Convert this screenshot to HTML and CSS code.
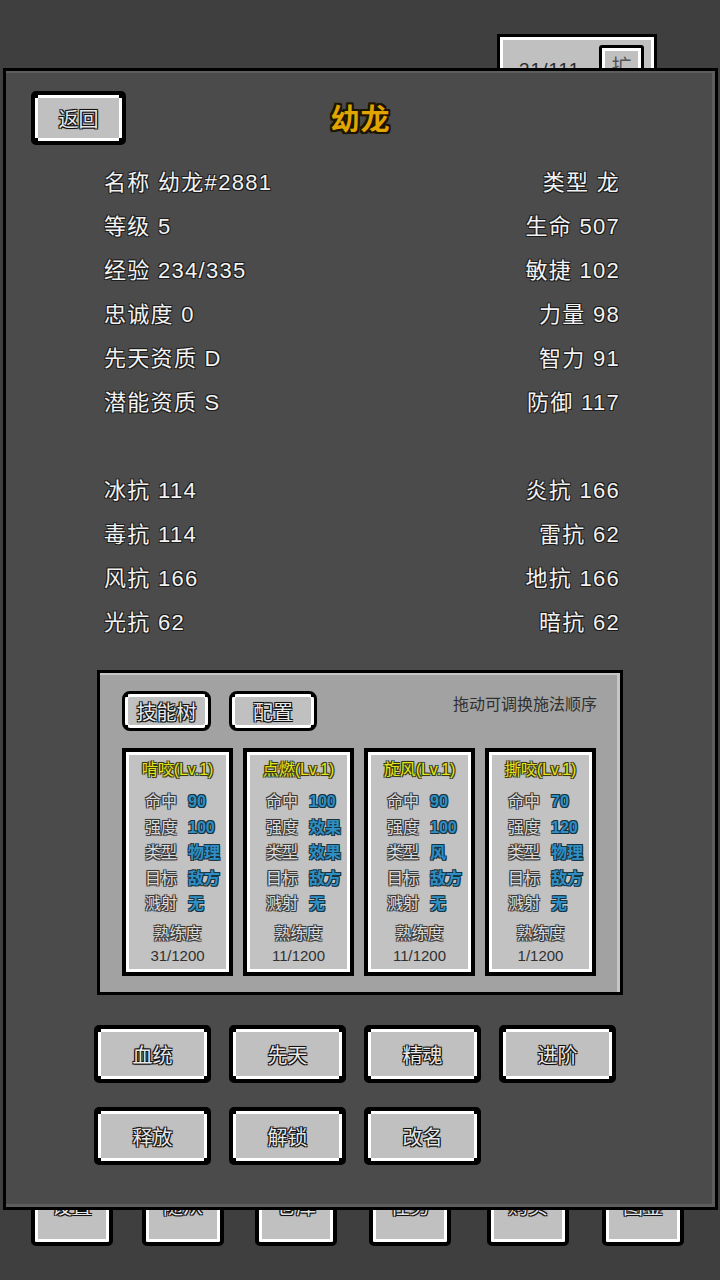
FILE: index.html
```html
<!DOCTYPE html>
<html lang="zh">
<head>
<meta charset="utf-8">
<link rel="stylesheet" href="styles.css">
</head>
<body>
<div class="screen">
  <div class="toptab">
    <span class="toptab-count">31/111</span>
    <span class="toptab-btn">扩</span>
  </div>

  <div class="bottomtabs">
    <div class="btab"><span class="ol">设置</span></div>
    <div class="btab"><span class="ol">随从</span></div>
    <div class="btab"><span class="ol">仓库</span></div>
    <div class="btab"><span class="ol">任务</span></div>
    <div class="btab"><span class="ol">购买</span></div>
    <div class="btab"><span class="ol">图鉴</span></div>
  </div>

  <div class="panel">
    <div class="header">
      <div class="pbtn back"><span class="ol">返回</span></div>
      <div class="title">幼龙</div>
      <div></div>
    </div>

    <div class="stats">
      <div>名称 幼龙#2881</div><div class="r">类型 龙</div>
      <div>等级 5</div><div class="r">生命 507</div>
      <div>经验 234/335</div><div class="r">敏捷 102</div>
      <div>忠诚度 0</div><div class="r">力量 98</div>
      <div>先天资质 D</div><div class="r">智力 91</div>
      <div>潜能资质 S</div><div class="r">防御 117</div>
      <div class="blank"></div><div class="blank"></div>
      <div>冰抗 114</div><div class="r">炎抗 166</div>
      <div>毒抗 114</div><div class="r">雷抗 62</div>
      <div>风抗 166</div><div class="r">地抗 166</div>
      <div>光抗 62</div><div class="r">暗抗 62</div>
    </div>

    <div class="skills">
      <div class="skills-head">
        <div class="pbtn small sb1"><span class="ol">技能树</span></div>
        <div class="pbtn small sb2"><span class="ol">配置</span></div>
        <div class="hint">拖动可调换施法顺序</div>
      </div>
      <div class="cards">
        <div class="card">
          <div class="ctitle">啃咬(Lv.1)</div>
          <div class="crows">
            <span class="lab">命中</span><span class="val">90</span>
            <span class="lab">强度</span><span class="val">100</span>
            <span class="lab">类型</span><span class="val">物理</span>
            <span class="lab">目标</span><span class="val">敌方</span>
            <span class="lab">溅射</span><span class="val">无</span>
          </div>
          <div class="prof lab">熟练度</div>
          <div class="pnum">31/1200</div>
        </div>
        <div class="card">
          <div class="ctitle">点燃(Lv.1)</div>
          <div class="crows">
            <span class="lab">命中</span><span class="val">100</span>
            <span class="lab">强度</span><span class="val">效果</span>
            <span class="lab">类型</span><span class="val">效果</span>
            <span class="lab">目标</span><span class="val">敌方</span>
            <span class="lab">溅射</span><span class="val">无</span>
          </div>
          <div class="prof lab">熟练度</div>
          <div class="pnum">11/1200</div>
        </div>
        <div class="card">
          <div class="ctitle">旋风(Lv.1)</div>
          <div class="crows">
            <span class="lab">命中</span><span class="val">90</span>
            <span class="lab">强度</span><span class="val">100</span>
            <span class="lab">类型</span><span class="val">风</span>
            <span class="lab">目标</span><span class="val">敌方</span>
            <span class="lab">溅射</span><span class="val">无</span>
          </div>
          <div class="prof lab">熟练度</div>
          <div class="pnum">11/1200</div>
        </div>
        <div class="card">
          <div class="ctitle">撕咬(Lv.1)</div>
          <div class="crows">
            <span class="lab">命中</span><span class="val">70</span>
            <span class="lab">强度</span><span class="val">120</span>
            <span class="lab">类型</span><span class="val">物理</span>
            <span class="lab">目标</span><span class="val">敌方</span>
            <span class="lab">溅射</span><span class="val">无</span>
          </div>
          <div class="prof lab">熟练度</div>
          <div class="pnum">1/1200</div>
        </div>
      </div>
    </div>

    <div class="actions">
      <div class="pbtn act"><span class="ol">血统</span></div>
      <div class="pbtn act"><span class="ol">先天</span></div>
      <div class="pbtn act"><span class="ol">精魂</span></div>
      <div class="pbtn act"><span class="ol">进阶</span></div>
      <div class="pbtn act"><span class="ol">释放</span></div>
      <div class="pbtn act"><span class="ol">解锁</span></div>
      <div class="pbtn act"><span class="ol">改名</span></div>
    </div>
  </div>
</div>
</body>
</html>
```

FILE: styles.css
```css
* { box-sizing: border-box; }

html, body {
  margin: 0;
  padding: 0;
}

body {
  background: #3f3f3f;
  font-family: "Liberation Sans", "Noto Sans CJK SC", sans-serif;
  color: #f0f0f0;
}

.screen {
  position: relative;
  width: 720px;
  height: 1280px;
  padding-top: 68px;
  padding-left: 3px;
  overflow: hidden;
}

.ol {
  text-shadow: -1px -1px 0 #111, 1px -1px 0 #111, -1px 1px 0 #111, 1px 1px 0 #111, 0 0 2px #000;
}

/* ---------- background tabs (under the panel) ---------- */
.toptab {
  position: absolute;
  left: 497px;
  top: 34px;
  width: 160px;
  height: 60px;
  background: #c0c0c0;
  border: 3px solid #000;
  box-shadow: inset 0 0 0 3px #fff;
  display: flex;
  align-items: flex-start;
  padding: 8px 10px 0 19px;
  z-index: 0;
}

.toptab-count {
  font-size: 19px;
  line-height: 24px;
  color: #2a2a2a;
  margin-top: 13px;
  letter-spacing: 1px;
}

.toptab-btn {
  margin-left: auto;
  width: 45px;
  height: 40px;
  border: 3px solid #000;
  border-radius: 3px;
  box-shadow: inset 0 0 0 3px #fff;
  background: #c0c0c0;
  font-size: 20px;
  line-height: 30px;
  text-align: center;
  color: #555;
  padding-top: 4px;
}

.bottomtabs {
  position: absolute;
  left: 0;
  top: 1170px;
  width: 720px;
  height: 76px;
  z-index: 0;
}

.btab {
  position: absolute;
  top: 0;
  width: 82px;
  height: 76px;
  background: #c0c0c0;
  border: 4px solid #000;
  border-radius: 0 0 5px 5px;
  box-shadow: inset 0 0 0 3px #fff;
  text-align: center;
  font-size: 20px;
  line-height: 24px;
  padding-top: 21px;
  color: #e6e6e6;
}
.btab:nth-child(1) { left: 31px; }
.btab:nth-child(2) { left: 142px; }
.btab:nth-child(3) { left: 255px; }
.btab:nth-child(4) { left: 369px; }
.btab:nth-child(5) { left: 487px; }
.btab:nth-child(6) { left: 602px; }

/* ---------- main panel ---------- */
.panel {
  position: relative;
  z-index: 1;
  width: 715px;
  height: 1142px;
  background: #4b4b4b;
  border: 3px solid #000;
  box-shadow: inset 0 2px 0 #5e5e5e, inset -3px 0 0 #5e5e5e, inset 0 -3px 0 #5e5e5e;
}

/* pixel button */
.pbtn {
  position: relative;
  background: #c0c0c0;
  border: 4px solid #000;
  border-radius: 5px;
  box-shadow: inset 0 0 0 3px #fff;
  display: flex;
  align-items: center;
  justify-content: center;
  color: #e8e8e8;
}
.pbtn::before {
  content: "";
  position: absolute;
  inset: 0;
  pointer-events: none;
  background:
    linear-gradient(#000, #000) left top / 3px 3px no-repeat,
    linear-gradient(#000, #000) right top / 3px 3px no-repeat,
    linear-gradient(#000, #000) left bottom / 3px 3px no-repeat,
    linear-gradient(#000, #000) right bottom / 3px 3px no-repeat;
}

.header {
  margin-top: 20px;
  height: 54px;
  padding: 0 25px;
  display: grid;
  grid-template-columns: 1fr auto 1fr;
  align-items: center;
}

.back {
  width: 95px;
  height: 54px;
  font-size: 20px;
}

.title {
  font-size: 29px;
  font-weight: bold;
  color: #e2a400;
  letter-spacing: 1px;
  text-shadow: -2px -2px 0 #1a1400, 2px -2px 0 #1a1400, -2px 2px 0 #1a1400, 2px 2px 0 #1a1400, 0 2px 0 #1a1400, 0 -2px 0 #1a1400, 2px 0 0 #1a1400, -2px 0 0 #1a1400;
  margin-top: -2px;
}

/* stats */
.stats {
  margin-top: 16px;
  padding: 0 95px 0 98px;
  display: grid;
  grid-template-columns: 1fr 1fr;
  font-size: 22px;
  line-height: 44px;
  letter-spacing: 1.3px;
  color: #f2f2f2;
  text-shadow: -1px -1px 0 #1c1c1c, 1px -1px 0 #1c1c1c, -1px 1px 0 #1c1c1c, 1px 1px 0 #1c1c1c;
}
.stats > div { height: 44px; white-space: pre; }
.stats .r { text-align: right; }

/* skills panel */
.skills {
  margin: 25px 0 0 91px;
  width: 526px;
  height: 325px;
  background: #a2a2a2;
  border: 3px solid #000;
  box-shadow: inset 0 2px 0 #c6c6c6, inset -3px 0 0 #c6c6c6;
  padding: 18px 23px 0 22px;
}

.skills-head {
  display: flex;
  align-items: flex-start;
  gap: 18px;
  height: 39px;
}

.small {
  height: 40px;
  border-width: 3px;
  border-radius: 8px;
  font-size: 20px;
}
.sb1 { width: 89px; }
.sb2 { width: 88px; }

.hint {
  margin-left: auto;
  font-size: 16px;
  line-height: 18px;
  margin-top: 5px;
  color: #303030;
}

.cards {
  margin-top: 18px;
  display: flex;
  gap: 10px;
}

.card {
  width: 111px;
  height: 228px;
  background: #c2c2c2;
  border: 4px solid #000;
  box-shadow: inset 0 0 0 3px #fff;
  padding: 6px 0 0 0;
  display: flex;
  flex-direction: column;
}

.ctitle {
  text-align: center;
  font-size: 16px;
  line-height: 24px;
  color: #e4e418;
  text-shadow: -1px -1px 0 #3a3a10, 1px -1px 0 #3a3a10, -1px 1px 0 #3a3a10, 1px 1px 0 #3a3a10, 0 0 2px #222;
}

.crows {
  margin-top: 7px;
  padding-left: 19px;
  display: grid;
  grid-template-columns: 32px auto;
  column-gap: 11px;
  grid-auto-rows: 25.5px;
  align-items: center;
  font-size: 16px;
  line-height: 25.5px;
}

.lab {
  color: #dcdcdc;
  text-shadow: -1px -1px 0 #3a3a3a, 1px -1px 0 #3a3a3a, -1px 1px 0 #3a3a3a, 1px 1px 0 #3a3a3a, 0 0 2px #222;
}

.val {
  color: #2f8fc4;
  font-weight: bold;
  text-shadow: -1px -1px 0 #17333f, 1px -1px 0 #17333f, -1px 1px 0 #17333f, 1px 1px 0 #17333f;
}

.prof {
  margin-top: 6px;
  text-align: center;
  font-size: 16px;
  line-height: 22px;
}

.pnum {
  text-align: center;
  font-size: 15px;
  line-height: 22px;
  color: #303030;
}

/* action buttons */
.actions {
  margin: 30px 0 0 88px;
  display: grid;
  grid-template-columns: repeat(4, 117px);
  grid-auto-rows: 58px;
  column-gap: 18px;
  row-gap: 24px;
}

.act {
  font-size: 20px;
}
```
